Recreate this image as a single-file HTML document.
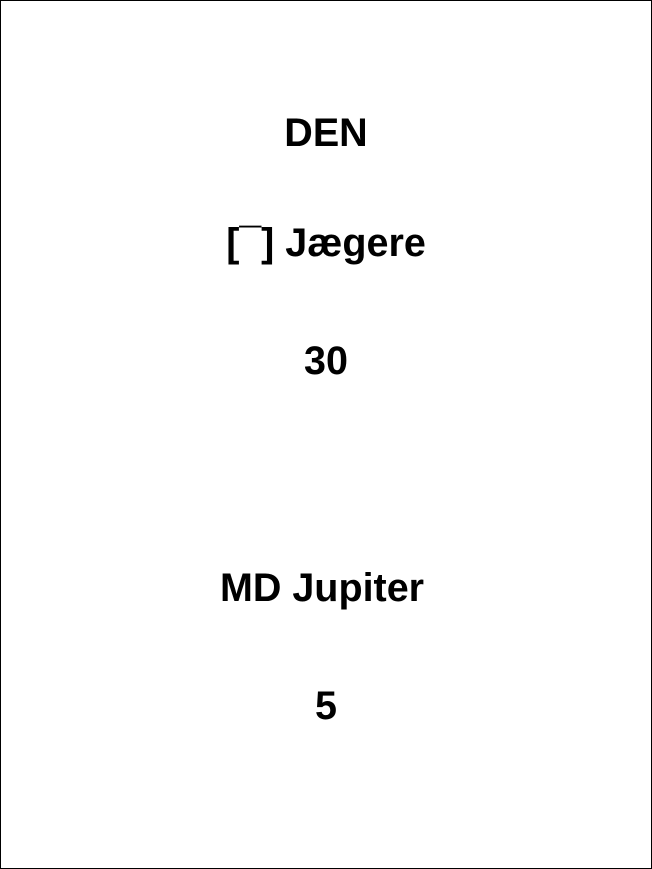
<!DOCTYPE html>
<html><head><style>
html,body{margin:0;padding:0;background:#fff}
body{width:652px;height:869px;position:relative;overflow:hidden}
.frame{position:absolute;left:0;top:0;width:650px;height:867px;border:1px solid #000}
.t{position:absolute;left:0;width:652px;text-align:center;font-family:"Liberation Sans",Arial,sans-serif;font-weight:bold;font-size:39.5px;line-height:44px;color:#000;white-space:nowrap}
</style></head><body>
<div class="frame"></div>
<div class="t" style="top:111px">DEN</div>
<div class="t" style="top:221px">[¯] Jægere</div>
<div class="t" style="top:339px">30</div>
<div class="t" style="top:566px;left:-4px">MD Jupiter</div>
<div class="t" style="top:684px">5</div>
</body></html>
